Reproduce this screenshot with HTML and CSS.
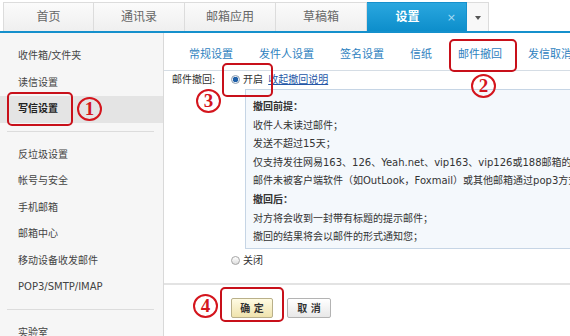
FILE: index.html
```html
<!DOCTYPE html>
<html lang="zh-CN">
<head>
  <meta charset="UTF-8">
  <title>设置 - 邮件撤回</title>
  <link rel="stylesheet" href="styles.css">
</head>
<body>
<div class="page">

  <!-- top tabs -->
  <div class="topbar">
    <div class="tab">首页</div>
    <div class="tab">通讯录</div>
    <div class="tab">邮箱应用</div>
    <div class="tab">草稿箱</div>
    <div class="tab active">设置<span class="close">×</span></div>
    <div class="tab more"><span class="caret"></span></div>
  </div>

  <div class="content">
    <!-- left menu -->
    <div class="sidebar">
      <div class="item">收件箱/文件夹</div>
      <div class="item">读信设置</div>
      <div class="item on">写信设置</div>
      <div class="sep"></div>
      <div class="item">反垃圾设置</div>
      <div class="item">帐号与安全</div>
      <div class="item">手机邮箱</div>
      <div class="item">邮箱中心</div>
      <div class="item">移动设备收发邮件</div>
      <div class="item">POP3/SMTP/IMAP</div>
      <div class="sep"></div>
      <div class="item">实验室</div>
    </div>

    <div class="main">
      <div class="subtabs">
        <span class="subtab">常规设置</span>
        <span class="subtab">发件人设置</span>
        <span class="subtab">签名设置</span>
        <span class="subtab">信纸</span>
        <span class="subtab on">邮件撤回</span>
        <span class="subtab">发信取消</span>
      </div>

      <div class="form">
        <div class="row">
          <span class="label">邮件撤回:</span>
          <div class="field">
            <div class="opt"><span class="radio checked"></span>开启 <a class="link" href="#">收起撤回说明</a></div>
            <div class="info">
              <div class="title">撤回前提：</div>
              <div>收件人未读过邮件；</div>
              <div>发送不超过15天；</div>
              <div>仅支持发往网易163、126、Yeah.net、vip163、vip126或188邮箱的邮件；</div>
              <div>邮件未被客户端软件（如OutLook，Foxmail）或其他邮箱通过pop3方式收取；</div>
              <div class="title">撤回后：</div>
              <div>对方将会收到一封带有标题的提示邮件；</div>
              <div>撤回的结果将会以邮件的形式通知您；</div>
            </div>
            <div class="opt off"><span class="radio"></span>关闭</div>
          </div>
        </div>
      </div>

      <div class="actions">
        <button class="btn ok">确 定</button>
        <button class="btn cancel">取 消</button>
      </div>
    </div>
  </div>

  <!-- red annotations -->
  <div class="mark m1"></div>
  <div class="mark m2"></div>
  <div class="mark m3"></div>
  <div class="mark m4"></div>
  <span class="num n1">1</span>
  <span class="num n2">2</span>
  <span class="num n3">3</span>
  <span class="num n4">4</span>

</div>
</body>
</html>
```

FILE: styles.css
```css
* {
  box-sizing: border-box;
}
body {
  margin: 0;
  font-family: "DejaVu Sans", "Noto Sans CJK SC", sans-serif;
  font-size: 10px;
  color: #333;
  background: #fff;
}
.page {
  position: relative;
  width: 570px;
  height: 336px;
  overflow: hidden;
}

/* top tabs */
.topbar {
  display: flex;
  height: 33px;
  padding: 2px 0 0 3px;
  border-bottom: 2px solid #1590cc;
}
.tab {
  width: 91px;
  height: 29px;
  line-height: 29px;
  text-align: center;
  font-size: 12px;
  color: #666;
  background: linear-gradient(#fbfbfb, #efefef);
  border: 1px solid #dcdcdc;
  border-bottom: none;
}
.tab + .tab {
  border-left: none;
}
.tab.active {
  position: relative;
  width: 100px;
  padding-right: 18px;
  color: #fff;
  font-weight: bold;
  background: linear-gradient(#2aa7df, #0d8ecb);
  border-color: #1590cc;
}
.close {
  position: absolute;
  right: 10px;
  top: 0;
  font-size: 11px;
  font-weight: normal;
  color: #a8dbf3;
}
.tab.more {
  width: 22px;
  background: #f8f8f8;
}
.caret {
  display: inline-block;
  vertical-align: middle;
  border-top: 4px solid #555;
  border-left: 3px solid transparent;
  border-right: 3px solid transparent;
}

/* layout */
.content {
  display: flex;
  height: 303px;
}
.sidebar {
  width: 164px;
  flex-shrink: 0;
  padding-top: 10px;
  background: #f6f6f6;
  border-right: 1px solid #d9d9d9;
}
.item {
  height: 26.5px;
  line-height: 26.5px;
  padding-left: 18px;
  color: #444;
}
.item.on {
  background: #e4e4e4;
  color: #222;
  font-weight: bold;
}
.sep {
  height: 1px;
  background: #dcdcdc;
  margin: 8px 9px 10px 7px;
}
.main {
  flex: 1;
  min-width: 0;
  overflow: hidden;
}

/* sub tabs */
.subtabs {
  display: flex;
  height: 38px;
  padding: 6px 0 0 12px;
  border-bottom: 1px solid #d5dde5;
  white-space: nowrap;
}
.subtab {
  padding: 0 13px;
  line-height: 31px;
  font-size: 11px;
  color: #2e82c0;
}

/* form */
.form {
  padding: 0 0 13px 8px;
}
.row {
  display: flex;
}
.label {
  width: 59px;
  flex-shrink: 0;
  line-height: 18px;
}
.field {
  flex: 1;
  min-width: 0;
}
.opt {
  line-height: 18px;
  white-space: nowrap;
}
.opt.off {
  margin-top: 3px;
}
.radio {
  display: inline-block;
  width: 9px;
  height: 9px;
  margin: 0 3px 0 0;
  vertical-align: -1px;
  border: 1px solid #a5a5a5;
  border-radius: 50%;
  background: linear-gradient(#fff, #dedede);
}
.radio.checked {
  background: radial-gradient(circle, #1e5fa8 0 2.5px, #e8eef5 3px);
  border-color: #8a9cb0;
}
.link {
  margin-left: 2px;
  color: #2557a7;
  text-decoration: underline;
}
.info {
  width: 400px;
  margin-left: 14px;
  padding: 8px 0 1px 7px;
  line-height: 18.6px;
  white-space: nowrap;
  background: #f4f8fc;
  border: 1px solid #c6d5e5;
}
.title {
  font-weight: bold;
}

/* buttons */
.actions {
  display: flex;
  gap: 14px;
  padding: 13px 0 0 67px;
  border-top: 2px solid #e3e3e3;
}
.btn {
  width: 44px;
  height: 20px;
  padding: 0;
  font-family: inherit;
  font-size: 10px;
  font-weight: bold;
  color: #333;
  border: 1px solid #b3b3b3;
  border-radius: 2px;
  background: linear-gradient(#fff, #e8e8e8);
}
.btn.ok {
  width: 42px;
  background: linear-gradient(#fffbe3, #efe3ad);
  border-color: #b9b08a;
}

/* annotations */
.mark {
  position: absolute;
  border: 2px solid #c8101a;
  border-radius: 5px;
}
.m1 { left: 7px; top: 92px; width: 66px; height: 34px; }
.m2 { left: 449px; top: 39px; width: 68px; height: 33px; }
.m3 { left: 222px; top: 63px; width: 51px; height: 34px; }
.m4 { left: 220px; top: 287px; width: 64px; height: 35px; }
.num {
  position: absolute;
  width: 25px;
  height: 24px;
  border: 2px solid #d4151d;
  border-radius: 50%;
  color: #d4151d;
  font-family: "Liberation Serif", serif;
  font-size: 19px;
  font-weight: bold;
  line-height: 20px;
  text-align: center;
}
.n1 { left: 77px; top: 97px; }
.n2 { left: 471px; top: 74px; }
.n3 { left: 196px; top: 89px; }
.n4 { left: 193px; top: 294px; }
```
